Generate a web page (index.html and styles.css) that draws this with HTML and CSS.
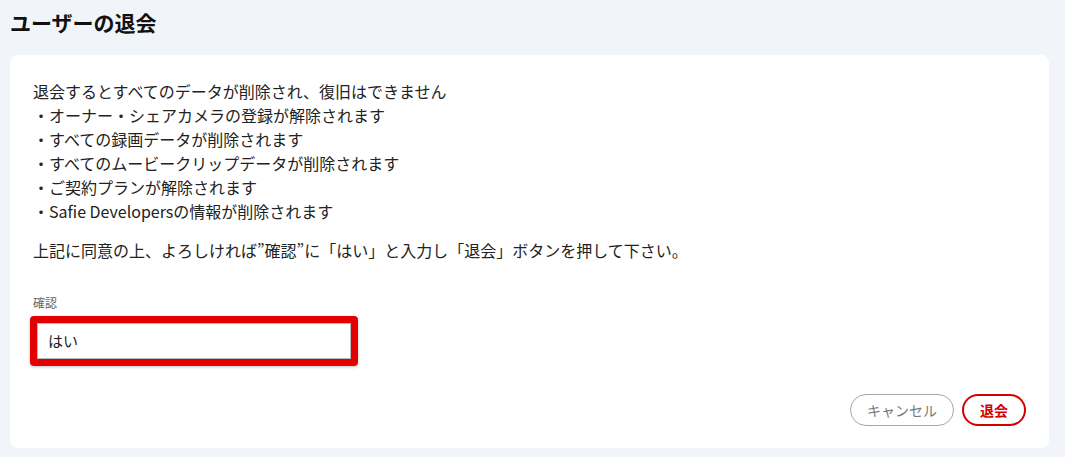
FILE: index.html
```html
<!DOCTYPE html>
<html lang="ja">
<head>
<meta charset="utf-8">
<link rel="stylesheet" href="styles.css">
</head>
<body>
<div class="page">
  <h1 class="title">ユーザーの退会</h1>
  <section class="card">
    <div class="notice">
      <p class="line">退会するとすべてのデータが削除され、復旧はできません</p>
      <p class="line">・オーナー・シェアカメラの登録が解除されます</p>
      <p class="line">・すべての録画データが削除されます</p>
      <p class="line">・すべてのムービークリップデータが削除されます</p>
      <p class="line">・ご契約プランが解除されます</p>
      <p class="line">・Safie Developersの情報が削除されます</p>
    </div>
    <p class="instruction">上記に同意の上、よろしければ”確認”に「はい」と入力し「退会」ボタンを押して下さい。</p>
    <label class="label">確認</label>
    <div class="highlight">
      <div class="input">はい</div>
    </div>
    <div class="actions">
      <button class="btn btn-cancel">キャンセル</button>
      <button class="btn btn-leave">退会</button>
    </div>
  </section>
</div>
</body>
</html>
```
FILE: styles.css
```css
* { box-sizing: border-box; }
html, body { margin: 0; padding: 0; }
body {
  background: #f1f4f9;
  font-family: "Noto Sans CJK JP", "Noto Sans", sans-serif;
  color: #222;
  width: 1065px;
  height: 457px;
  overflow: hidden;
}
.page { padding: 9px 16px 0 10px; }
.title {
  margin: 0;
  font-size: 21px;
  font-weight: 700;
  line-height: 26px;
  color: #111;
}
.card {
  margin-top: 20px;
  background: #fff;
  border-radius: 8px;
  padding: 24px 23px 22px 23px;
  height: 393px;
  display: flex;
  flex-direction: column;
}
.notice { display: flex; flex-direction: column; }
.line {
  margin: 0;
  font-size: 16px;
  line-height: 24px;
  color: #222;
}
.instruction {
  margin: 15px 0 0 0;
  font-size: 16px;
  line-height: 24px;
  color: #222;
}
.label {
  margin-top: 33px;
  font-size: 12px;
  line-height: 16px;
  color: #666;
}
.highlight {
  margin-top: 5px;
  margin-left: -3px;
  width: 328px;
  height: 50px;
  border: 7px solid #e30000;
  border-radius: 4px;
  box-shadow: 0 1px 3px rgba(0,0,0,0.25);
  padding: 0;
}
.input {
  height: 100%;
  border: 1px solid #bbb;
  padding: 0 10px;
  font-size: 15px;
  line-height: 34px;
  color: #222;
}
.actions {
  margin-top: auto;
  display: flex;
  justify-content: flex-end;
  gap: 8px;
  padding-right: 0;
}
.btn {
  height: 32px;
  border-radius: 16px;
  background: #fff;
  font-family: "Noto Sans CJK JP", "Noto Sans", sans-serif;
  font-size: 14px;
  padding: 0 14px;
  cursor: pointer;
}
.btn-cancel {
  width: 104px;
  border: 1px solid #a8a8a8;
  color: #777;
}
.btn-leave {
  width: 64px;
  border: 2px solid #d40000;
  color: #d40000;
  font-weight: 700;
}
```
